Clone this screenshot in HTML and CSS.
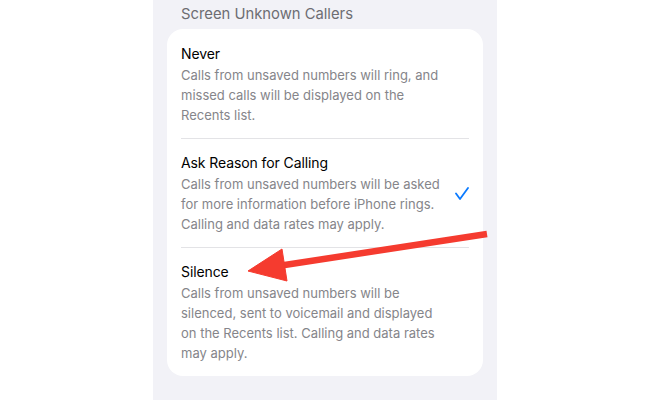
FILE: index.html
```html
<!DOCTYPE html>
<html lang="en">
<head>
<meta charset="utf-8">
<title>Screen Unknown Callers</title>
<link rel="stylesheet" href="styles.css">
</head>
<body>
  <main class="panel">
    <h2 class="section-title">Screen Unknown Callers</h2>
    <section class="card">
      <div class="option">
        <div class="option-text">
          <div class="option-title">Never</div>
          <p class="option-desc">Calls from unsaved numbers will ring, and<br>missed calls will be displayed on the<br>Recents list.</p>
        </div>
      </div>
      <div class="option">
        <div class="option-text">
          <div class="option-title">Ask Reason for Calling</div>
          <p class="option-desc">Calls from unsaved numbers will be asked<br>for more information before iPhone rings.<br>Calling and data rates may apply.</p>
        </div>
        <svg class="check" width="14" height="13" viewBox="0 0 14 13" aria-hidden="true">
          <path d="M1 6.5 L5 12 L13 1" fill="none" stroke="#0a7aff" stroke-width="1.8" stroke-linecap="round" stroke-linejoin="round"/>
        </svg>
      </div>
      <div class="option">
        <div class="option-text">
          <div class="option-title">Silence</div>
          <p class="option-desc">Calls from unsaved numbers will be<br>silenced, sent to voicemail and displayed<br>on the Recents list. Calling and data rates<br>may apply.</p>
        </div>
      </div>
    </section>
  </main>

  <!-- annotation arrow pointing at the Silence option -->
  <svg class="annotation" width="650" height="400" viewBox="0 0 650 400" aria-hidden="true">
    <line x1="487" y1="234" x2="278" y2="266" stroke="#f53b2f" stroke-width="6.5" stroke-linecap="butt"/>
    <polygon points="248,271 282,249 287,281" fill="#f53b2f" stroke="#f53b2f" stroke-width="1" stroke-linejoin="round"/>
  </svg>
</body>
</html>
```

FILE: styles.css
```css
html, body {
  margin: 0;
  padding: 0;
  background: #ffffff;
}

body {
  width: 650px;
  height: 400px;
  overflow: hidden;
  position: relative;
  font-family: Inter, "Liberation Sans", sans-serif;
  -webkit-font-smoothing: antialiased;
}

.panel {
  width: 344px;
  height: 400px;
  margin: 0 auto;
  background: #f2f2f7;
  box-sizing: border-box;
  padding: 0 14px;
}

.section-title {
  margin: 0;
  padding: 3.6px 0 0 14px;
  font-size: 14.8px;
  font-weight: 400;
  line-height: 20px;
  color: #6d6d72;
}

.card {
  margin-top: 5.4px;
  background: #ffffff;
  border-radius: 16px;
  padding: 0 14px;
}

.option {
  display: flex;
  align-items: center;
  padding: 14px 0 12.4px;
  border-top: 1px solid #e3e3e6;
}

.option:first-child {
  padding-top: 15px;
  border-top: none;
}

.option-text {
  flex: 1;
}

.option-title {
  font-size: 14px;
  line-height: 20px;
  letter-spacing: -0.1px;
  color: #000000;
}

.option-desc {
  margin: 2.5px 0 0;
  font-size: 13px;
  line-height: 19.7px;
  color: #85858a;
}

.check {
  display: block;
  flex: none;
}

.annotation {
  position: absolute;
  left: 0;
  top: 0;
  pointer-events: none;
}
```
